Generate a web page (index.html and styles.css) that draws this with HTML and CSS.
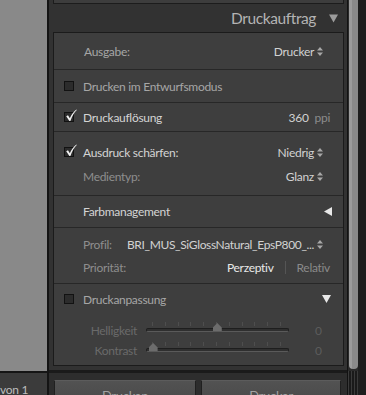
FILE: index.html
```html
<!DOCTYPE html>
<html lang="de">
<head>
<meta charset="utf-8">
<link rel="stylesheet" href="styles.css">
</head>
<body>
<div class="left">
  <div class="preview"></div>
  <div class="pager">von 1</div>
</div>
<div class="panel">
  <div class="prev-box"></div>
  <div class="header">
    <span class="title">Druckauftrag</span>
    <svg class="tri-down-h" width="9" height="9" viewBox="0 0 9 9"><path d="M0 0.5H9L4.5 8.5Z" fill="#9c9c9c"/></svg>
  </div>
  <div class="box">
    <div class="row r-out">
      <span class="lbl">Ausgabe:</span>
      <span class="val">Drucker <svg class="ud" width="6" height="9" viewBox="0 0 6 9"><path d="M0 3.6H6L3 0Z M0 5.4H6L3 9Z" fill="#a8a8a8"/></svg></span>
    </div>
    <div class="row r-draft">
      <span class="cb"></span>
      <span class="lbl">Drucken im Entwurfsmodus</span>
    </div>
    <div class="row r-res">
      <span class="cb checked"><svg class="ck" width="12" height="13" viewBox="0 0 12 13"><path d="M1.2 7.3 L3 6.2 L4.8 9.2 C6.6 5.2 8.6 2.4 11.4 0.4 L11.8 1.1 C9.2 3.6 7.2 7.2 5.4 12 L4.4 12 Z" fill="#f2f2f2"/></svg></span>
      <span class="lbl bright">Druckauflösung</span>
      <span class="val"><span class="num">360</span> <span class="unit">ppi</span></span>
    </div>
    <div class="group g-sharp">
      <div class="line">
        <span class="cb checked"><svg class="ck" width="12" height="13" viewBox="0 0 12 13"><path d="M1.2 7.3 L3 6.2 L4.8 9.2 C6.6 5.2 8.6 2.4 11.4 0.4 L11.8 1.1 C9.2 3.6 7.2 7.2 5.4 12 L4.4 12 Z" fill="#f2f2f2"/></svg></span>
        <span class="lbl bright">Ausdruck schärfen:</span>
        <span class="val">Niedrig <svg class="ud" width="6" height="9" viewBox="0 0 6 9"><path d="M0 3.6H6L3 0Z M0 5.4H6L3 9Z" fill="#a8a8a8"/></svg></span>
      </div>
      <div class="line indent">
        <span class="lbl dim">Medientyp:</span>
        <span class="val">Glanz <svg class="ud" width="6" height="9" viewBox="0 0 6 9"><path d="M0 3.6H6L3 0Z M0 5.4H6L3 9Z" fill="#a8a8a8"/></svg></span>
      </div>
    </div>
    <div class="row r-color">
      <span class="lbl bright">Farbmanagement</span>
      <svg class="tri-left" width="8" height="9" viewBox="0 0 8 9"><path d="M8 0V9L0 4.5Z" fill="#e8e8e8"/></svg>
    </div>
    <div class="group g-prof">
      <div class="line indent">
        <span class="lbl dim w-prof">Profil:</span>
        <span class="val prof">BRI_MUS_SiGlossNatural_EpsP800_... <svg class="ud" width="6" height="9" viewBox="0 0 6 9"><path d="M0 3.6H6L3 0Z M0 5.4H6L3 9Z" fill="#a8a8a8"/></svg></span>
      </div>
      <div class="line indent">
        <span class="lbl dim">Priorität:</span>
        <span class="prio"><span class="on">Perzeptiv</span><span class="sep"></span><span class="off">Relativ</span></span>
      </div>
    </div>
    <div class="group g-adj">
      <div class="line">
        <span class="cb"></span>
        <span class="lbl">Druckanpassung</span>
        <svg class="tri-down" width="9" height="8" viewBox="0 0 9 8"><path d="M0 0H9L4.5 8Z" fill="#e8e8e8"/></svg>
      </div>
      <div class="slider">
        <span class="s-lbl">Helligkeit</span>
        <div class="track"><span class="ticks"></span><span class="thumb" style="left: 49.5%"></span></div>
        <span class="s-val">0</span>
      </div>
      <div class="slider">
        <span class="s-lbl">Kontrast</span>
        <div class="track"><span class="ticks"></span><span class="thumb" style="left: 4%"></span></div>
        <span class="s-val">0</span>
      </div>
    </div>
  </div>
  <div class="footer">
    <div class="btn b1">Drucken</div>
    <div class="btn b2">Drucker</div>
  </div>
</div>
<div class="scroll">
  <div class="thumb-s"></div>
  <div class="grip"></div>
</div>
<div class="edge"></div>
</body>
</html>
```

FILE: styles.css
```css
html, body {
  margin: 0;
  padding: 0;
}
body {
  width: 366px;
  height: 395px;
  overflow: hidden;
  display: flex;
  background: #1c1c1c;
  font-family: Lato, "Liberation Sans", sans-serif;
  font-size: 12px;
  letter-spacing: -0.3px;
  color: #a4a4a4;
}
.left {
  width: 47px;
  display: flex;
  flex-direction: column;
  border-right: 2px solid #141414;
  flex: none;
}
.preview {
  flex: 1;
  background: #898989;
}
.pager {
  flex: none;
  height: 24px;
  border-top: 2px solid #151515;
  background: #3b3b3b;
  color: #bdbdbd;
  font-size: 12px;
  line-height: 14px;
  padding-top: 10px;
  box-sizing: border-box;
  white-space: nowrap;
  overflow: hidden;
}
.panel {
  width: 298px;
  flex: none;
  background: #323232;
  display: flex;
  flex-direction: column;
  overflow: hidden;
}
.panel > * {
  flex-shrink: 0;
}
.prev-box {
  height: 3px;
  margin: 0 3px 0 4px;
  border: 1px solid #1c1c1c;
  border-top: none;
  background: #3d3d3d;
}
.header {
  height: 28px;
  display: flex;
  align-items: center;
  justify-content: flex-end;
  padding-right: 9px;
  gap: 13px;
}
.title {
  font-size: 15.5px;
  color: #b4b4b4;
  letter-spacing: -0.4px;
}
.tri-down-h {
  display: block;
}
.box {
  margin: 0 3px 0 4px;
  border: 1px solid #1b1b1b;
  background: #3e3e3e;
}
.row, .line {
  display: flex;
  align-items: center;
  padding: 0 20px 0 10px;
}
.row {
  border-bottom: 1px solid #272727;
  box-sizing: border-box;
}
.group {
  border-bottom: 1px solid #272727;
  display: flex;
  flex-direction: column;
}
.indent {
  padding-left: 29px;
}
.r-out {
  height: 37px;
  padding-left: 30px;
}
.r-draft {
  height: 33px;
}
.r-res {
  height: 29px;
}
.g-sharp {
  height: 64px;
  box-sizing: border-box;
  padding-top: 10px;
  gap: 4px;
}
.line {
  height: 20px;
  flex: none;
}
.r-color {
  height: 32px;
  padding-left: 29px;
  padding-right: 11px;
}
.g-prof {
  height: 56px;
  box-sizing: border-box;
  padding-top: 6px;
  gap: 3px;
}
.g-adj {
  border-bottom: none;
  height: 81px;
  box-sizing: border-box;
  padding-top: 5px;
}
.g-adj .line {
  padding-right: 12px;
  margin-bottom: 11px;
}
.lbl {
  white-space: nowrap;
  color: #a6a6a6;
}
.lbl.bright {
  color: #d4d4d4;
}
.lbl.dim {
  color: #8e8e8e;
}
.cb {
  width: 8px;
  height: 8px;
  border: 1px solid #121212;
  background: #2c2c2c;
  margin-right: 9px;
  position: relative;
  flex: none;
}
.ck {
  position: absolute;
  left: 0px;
  top: -4px;
}
.val {
  margin-left: auto;
  color: #d2d2d2;
  display: flex;
  align-items: center;
  gap: 3px;
  white-space: nowrap;
}
.ud {
  display: block;
}
.r-res .val {
  margin-right: -7px;
  gap: 6px;
}
.unit {
  color: #8c8c8c;
}
.w-prof {
  width: 45px;
}
.prof {
  margin-left: 0;
  flex: 1;
  justify-content: flex-end;
  letter-spacing: -0.35px;
}
.prio {
  margin-left: auto;
  margin-right: -7px;
  display: flex;
  align-items: center;
}
.on {
  color: #e8e8e8;
}
.sep {
  width: 1px;
  height: 13px;
  background: #555;
  margin: 0 11px;
}
.off {
  color: #8a8a8a;
}
.tri-left, .tri-down {
  margin-left: auto;
  display: block;
}
.slider {
  display: flex;
  align-items: center;
  height: 20px;
  flex: none;
}
.s-lbl {
  width: 83px;
  text-align: right;
  color: #6a6a6a;
  white-space: nowrap;
}
.track {
  margin-left: 9px;
  width: 143px;
  height: 4px;
  box-sizing: border-box;
  border: 1px solid #1e1e1e;
  border-bottom-color: #5a5a5a;
  border-radius: 2px;
  background: #2f2f2f;
  position: relative;
}
.ticks {
  position: absolute;
  left: 5px;
  right: 6px;
  top: -7px;
  height: 4px;
  background: repeating-linear-gradient(90deg, #4e4e4e 0 1px, transparent 1px 12.8px);
}
.thumb {
  position: absolute;
  top: -6px;
  width: 9px;
  height: 8px;
  margin-left: -4px;
  background: #6c6c6c;
  clip-path: polygon(50% 0, 100% 55%, 100% 100%, 0 100%, 0 55%);
}
.s-val {
  margin-left: 26px;
  color: #5c5c5c;
  font-size: 12px;
}
.footer {
  margin-top: 4px;
  flex: 1 1 auto;
  min-height: 0;
  border-top: 3px solid #1a1a1a;
  background: #2d2d2d;
  display: flex;
  gap: 5px;
  padding: 7px 6px 0 5px;
}
.btn {
  height: 30px;
  flex: none;
  box-sizing: border-box;
  border: 1px solid #202020;
  border-top-color: #5c5c5c;
  background: linear-gradient(#525252, #474747);
  color: #a2a2a2;
  font-size: 13px;
  text-align: center;
  padding-top: 7px;
  border-radius: 1px;
}
.b1 {
  width: 142px;
}
.b2 {
  width: 140px;
}
.scroll {
  width: 10px;
  flex: none;
  display: flex;
  flex-direction: column;
  border-left: 1px solid #121212;
  background: #2a2a2a;
}
.thumb-s {
  height: 369px;
  flex: none;
  background: linear-gradient(90deg, #9c9c9c 0 3px, #8a8a8a 3px);
  border-radius: 0 0 4px 4px;
  margin-left: 1px;
}
.grip {
  flex: 1;
  margin-top: 2px;
  background: repeating-linear-gradient(90deg, #3a3a3a 0 1px, #1a1a1a 1px 3px);
}
.edge {
  flex: 1;
  background: #1e1e1e;
}
```
